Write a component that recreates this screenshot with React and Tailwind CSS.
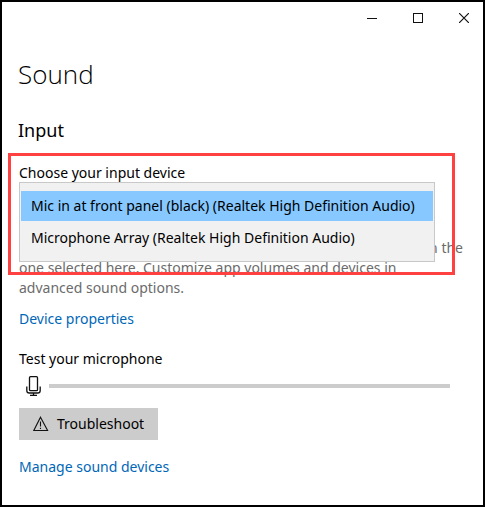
import React from "react";

const devices = [
  "Mic in at front panel (black) (Realtek High Definition Audio)",
  "Microphone Array (Realtek High Definition Audio)",
];

function WindowControls() {
  return (
    <div className="flex h-8 items-center justify-end gap-[26px] pr-[9px]">
      <button type="button" aria-label="Minimize" className="flex size-5 items-center justify-center">
        <svg width="10" height="10" viewBox="0 0 10 10" fill="none" stroke="#111" shapeRendering="crispEdges">
          <path d="M0 5.5H10" />
        </svg>
      </button>
      <button type="button" aria-label="Maximize" className="flex size-5 items-center justify-center">
        <svg width="10" height="10" viewBox="0 0 10 10" fill="none" stroke="#111" shapeRendering="crispEdges">
          <path d="M.5 .5H9.5V9.5H.5Z" />
        </svg>
      </button>
      <button type="button" aria-label="Close" className="flex size-5 items-center justify-center">
        <svg width="10" height="10" viewBox="0 0 10 10" fill="none" stroke="#111" strokeWidth="1.2">
          <path d="M0 0L10 10M10 0L0 10" />
        </svg>
      </button>
    </div>
  );
}

function MicIcon() {
  return (
    <svg width="15" height="20" viewBox="0 0 15 20" fill="none" stroke="#111" strokeWidth="1.3" aria-hidden="true">
      <rect x="3.5" y=".7" width="8" height="14" rx="1" />
      <path d="M.8 10.5V14.4Q.8 17 3.4 17H11.6Q14.2 17 14.2 14.4V10.5M7.5 17V19.3M4 19.3H11" />
    </svg>
  );
}

function WarningIcon() {
  return (
    <svg width="16" height="16" viewBox="0 0 16 16" fill="none" stroke="#111" strokeWidth="1.1" aria-hidden="true">
      <path d="M7.5 1.2L14.6 14.5H.8Z" />
      <path d="M7.5 5.5V10.6M7.5 11.8V13" />
    </svg>
  );
}

export default function App() {
  return (
    <div className="flex min-h-screen flex-col border-2 border-black bg-white font-['Noto_Sans','Open_Sans',sans-serif] text-sm leading-5 text-black">
      <WindowControls />
      <main className="flex flex-col items-start px-4 pt-5">
        <h1 className="font-['Open_Sans','Noto_Sans',sans-serif] text-[26px] leading-10 font-light">Sound</h1>
        <h2 className="mt-5 text-lg leading-8">Input</h2>

        <section className="relative mt-[18px] w-full pl-px">
          <label htmlFor="input-device" className="block leading-[18px]">
            Choose your input device
          </label>
          <div className="relative mr-8">
            <select
              id="input-device"
              className="block h-8 w-full max-w-[416px] appearance-none border-2 border-[#999] bg-white px-2"
            >
              {devices.map((name) => (
                <option key={name}>{name}</option>
              ))}
            </select>
            <ul
              role="listbox"
              aria-label="Input devices"
              className="absolute top-0 left-0 z-10 h-20 w-full max-w-[416px] border border-[#c8c8c8] bg-[#f1f1f1] px-px pt-2"
            >
              {devices.map((name, i) => (
                <li
                  key={name}
                  role="option"
                  aria-selected={i === 0}
                  className="mb-0.5 flex h-[30px] items-center px-2.5 whitespace-nowrap aria-selected:bg-[#86c8ff]"
                >
                  {name}
                </li>
              ))}
            </ul>
          </div>
          <p className="mt-6 text-[#6b6b6b]">
            <span className="block pr-1 text-right">
              Certain apps may be set up to use different input devices than the
            </span>
            one selected here. Customize app volumes and devices in
            <br />
            advanced sound options.
          </p>
          <div className="pointer-events-none absolute -top-[11px] right-3 -left-2.5 z-20 h-[122px] border-3 border-[#ff4141]" />
        </section>

        <div className="flex w-full flex-col items-start pl-px">
          <a href="#properties" className="mt-[11px] text-[#0067b8]">
            Device properties
          </a>
          <label htmlFor="mic-level" className="mt-5">
            Test your microphone
          </label>
          <div className="mt-[7px] flex w-full items-center gap-2 pr-[17px] pl-[7px]">
            <MicIcon />
            <progress
              id="mic-level"
              value="0"
              max="100"
              className="block h-1 min-w-0 flex-1 appearance-none bg-[#ccc] [&::-webkit-progress-bar]:bg-[#ccc]"
            />
          </div>
          <button type="button" className="mt-3 flex h-8 items-center gap-2 bg-[#ccc] px-3.5">
            <WarningIcon />
            Troubleshoot
          </button>
          <a href="#manage" className="mt-[17px] text-[#0067b8]">
            Manage sound devices
          </a>
        </div>
      </main>
    </div>
  );
}
